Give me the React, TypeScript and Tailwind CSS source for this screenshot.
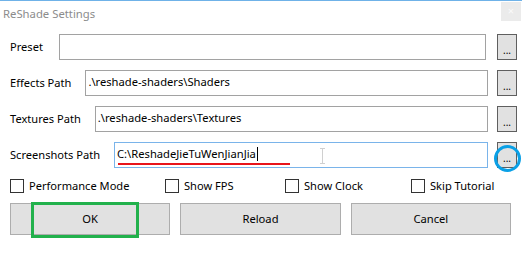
import React from "react";

const font = "font-['Segoe_UI','Noto_Sans',sans-serif]";

function PathRow({
  label,
  value,
  focused,
  caret,
  inset,
}: {
  label: string;
  value: string;
  focused?: boolean;
  caret?: boolean;
  inset?: boolean;
}) {
  return (
    <div className="flex h-[26px] items-center">
      <span className="mr-[14px] whitespace-nowrap text-[11.1px] text-black">{label}</span>
      <div
        className={`flex h-full flex-1 items-start border px-[2px] pt-[2px] text-[11.2px] text-black ${
          focused ? "border-[#7ab4ea]" : "border-[#a2a2a2]"
        } ${inset ? "ml-[2px] mr-[2px]" : ""}`}
      >
        <span className="whitespace-nowrap leading-[18px]">{value}</span>
        {caret && <span className="ml-[1px] mt-[2px] h-[14px] w-[1px] bg-black" />}
      </div>
      <button className="ml-[9px] flex h-[26px] w-[20px] items-end justify-center border border-[#5f5f5f] bg-[#e1e1e1] pb-[4px] text-[10px] leading-[10px] text-black">
        ...
      </button>
    </div>
  );
}

function Check({ label }: { label: string }) {
  return (
    <div className="flex items-center gap-[5px]">
      <span className="h-[14px] w-[14px] border border-[#333] bg-white" />
      <span className="whitespace-nowrap text-[11.1px] text-black">{label}</span>
    </div>
  );
}

export default function App() {
  return (
    <div className={`relative h-[254px] w-[522px] overflow-hidden border-t border-[#6fb2e8] bg-white ${font}`}>
      {/* title bar */}
      <div className="flex h-[33px] items-start justify-between">
        <span className="pl-[3px] pt-[5px] text-[11.3px] text-[#8c8c8c]">ReShade Settings</span>
        <div className="mr-[1px] mt-[1px] flex h-[19px] w-[20px] items-center justify-center bg-[#ebebeb] text-[11px] text-[#fafafa]">
          ×
        </div>
      </div>

      <div className="flex flex-col gap-[10px] pl-[10px] pr-[5px]">
        <PathRow label="Preset" value="" inset />
        <PathRow label="Effects Path" value=".\reshade-shaders\Shaders" />
        <PathRow label="Textures Path" value=".\reshade-shaders\Textures" />
        <PathRow label="Screenshots Path" value="C:\ReshadeJieTuWenJianJia" focused caret />

        <div className="grid h-[15px] grid-cols-[155px_120px_126px_auto] items-center">
          <Check label="Performance Mode" />
          <Check label="Show FPS" />
          <Check label="Show Clock" />
          <Check label="Skip Tutorial" />
        </div>

        <div className="grid grid-cols-3 gap-[10px] pr-[6px]">
          {["OK", "Reload", "Cancel"].map((t) => (
            <button
              key={t}
              className="h-[32px] border border-[#adadad] bg-[#e1e1e1] text-[11.2px] text-black"
            >
              {t}
            </button>
          ))}
        </div>
      </div>

      {/* annotations */}
      <div className="absolute left-[118px] top-[162px] h-[2px] w-[172px] bg-[#e8151b]" />
      <div className="absolute left-[320px] top-[147px] flex h-[16px] w-[5px] flex-col items-center justify-between">
        <span className="h-[1px] w-[5px] bg-[#d0d0d0]" />
        <span className="h-full w-[1px] bg-[#d0d0d0]" />
        <span className="h-[1px] w-[5px] bg-[#d0d0d0]" />
      </div>
      <div className="absolute left-[494px] top-[144px] h-[27px] w-[27px] rounded-full border-[3px] border-[#0aa0e6]" />
      <div className="absolute left-[31px] top-[201px] h-[36px] w-[108px] border-[3px] border-[#22b14c]" />
    </div>
  );
}
